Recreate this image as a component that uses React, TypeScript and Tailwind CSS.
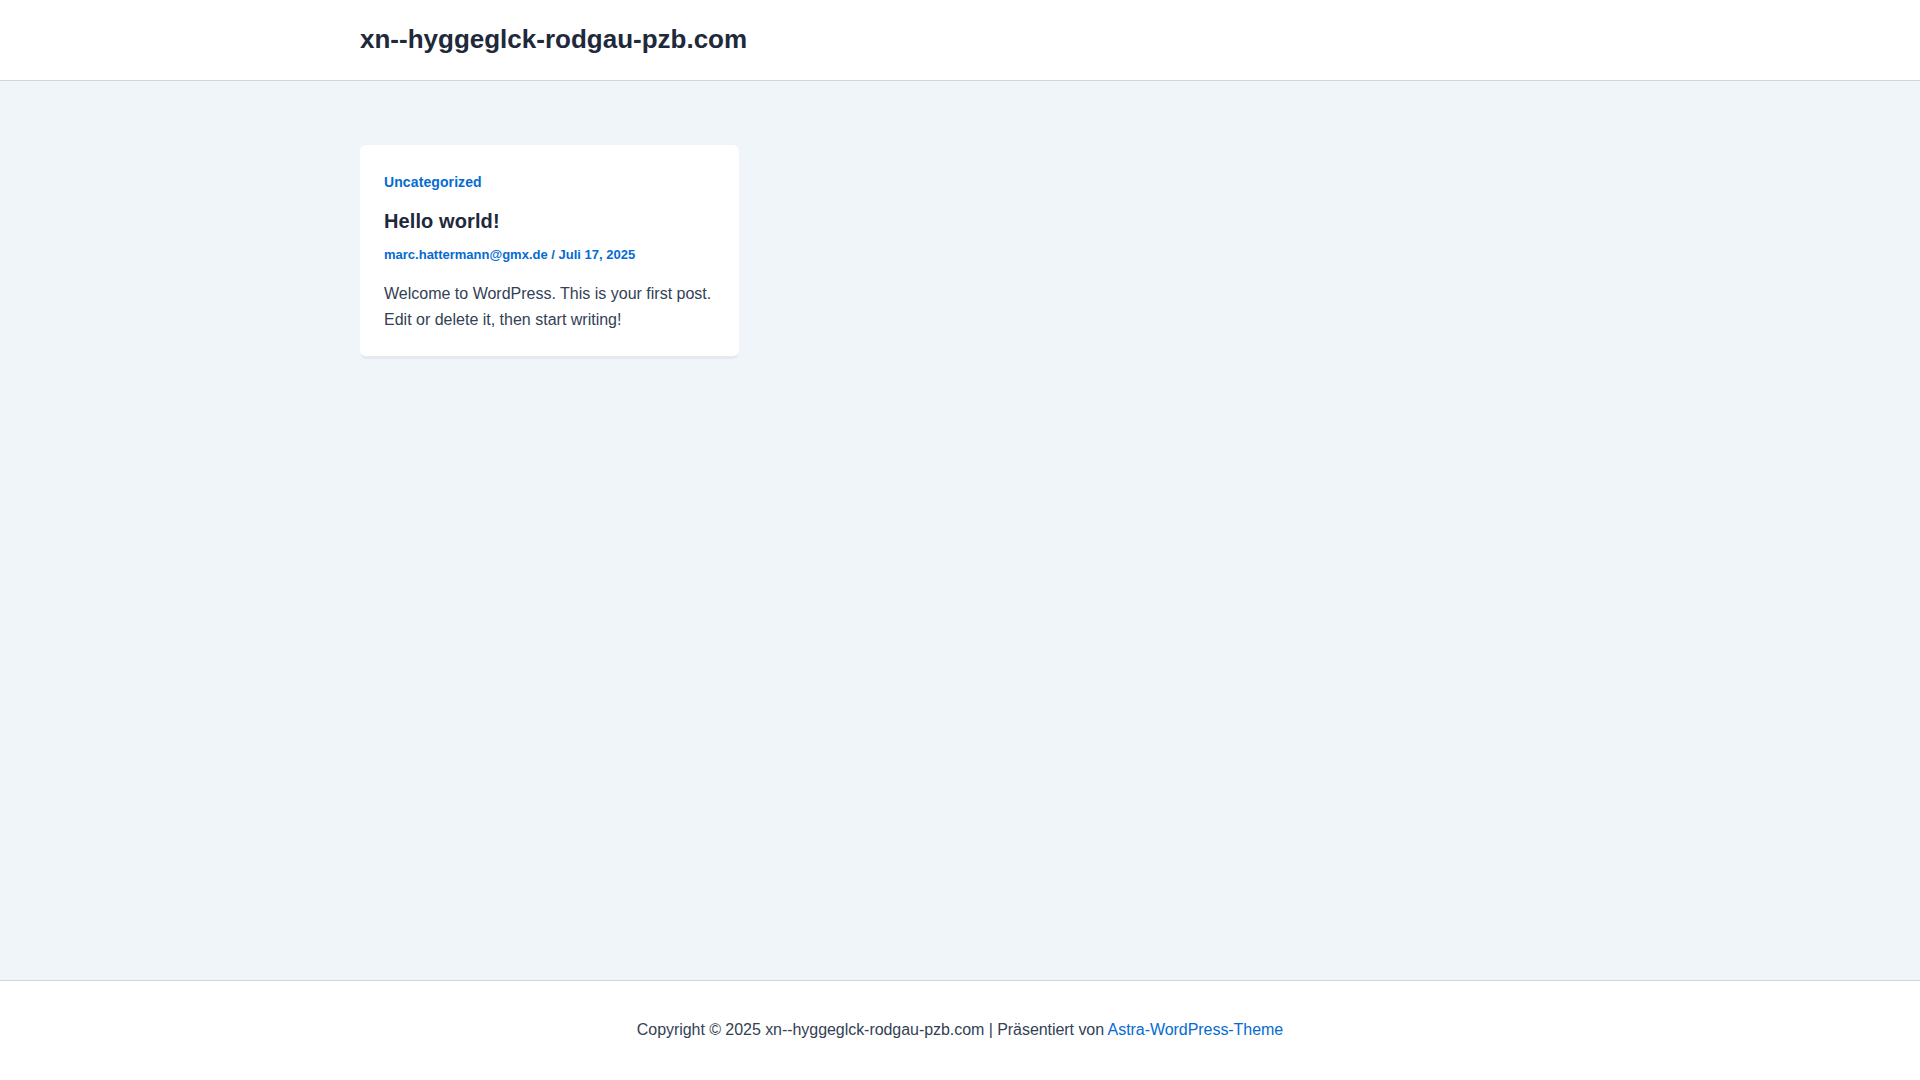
import React from 'react';

const font = { fontFamily: '"Liberation Sans", Arial, sans-serif' };

export default function App() {
    return (
        <div className="min-h-screen flex flex-col bg-[#f0f5fa] text-[#334155]" style={font}>
            {/* Header */}
            <header className="h-[81px] bg-white border-b border-[#d1d5db] flex items-center">
                <div className="w-[1200px] mx-auto pt-[1px]">
                    <a href="#" className="text-[26px] font-bold text-[#1e293b] leading-none">xn--hyggeglck-rodgau-pzb.com</a>
                </div>
            </header>

            {/* Main */}
            <main className="flex-1 h-[899px]">
                <div className="w-[1200px] mx-auto pt-[64px]">
                    <article className="w-[379px] bg-white rounded-md shadow-[0_4px_0_-1px_#e5eaf0] px-6 pt-[27px] pb-[23px]">
                        <a href="#" className="block text-[14px] font-bold text-[#046bd2] leading-[20px] tracking-[0.1px]">Uncategorized</a>
                        <h2 className="mt-[15px] text-[20px] font-bold text-[#1e293b] leading-[28px] tracking-[0.1px]">Hello world!</h2>
                        <div className="mt-[10px] text-[13px] font-bold text-[#046bd2] leading-[20px]">
                            <a href="#">marc.hattermann@gmx.de</a> / <span>Juli 17, 2025</span>
                        </div>
                        <p className="mt-[16px] text-[16px] leading-[26px] text-[#334155]">
                            Welcome to WordPress. This is your first post. Edit or delete it, then start writing!
                        </p>
                    </article>
                </div>
            </main>

            {/* Footer */}
            <footer className="h-[100px] bg-white border-t border-[#d1d5db] flex items-center justify-center">
                <p className="text-[16px] text-[#334155] tracking-[-0.05px] -mt-[2px]">
                    Copyright © 2025 xn--hyggeglck-rodgau-pzb.com | Präsentiert von <a href="#" className="text-[#046bd2]">Astra-WordPress-Theme</a>
                </p>
            </footer>
        </div>
    );
}
